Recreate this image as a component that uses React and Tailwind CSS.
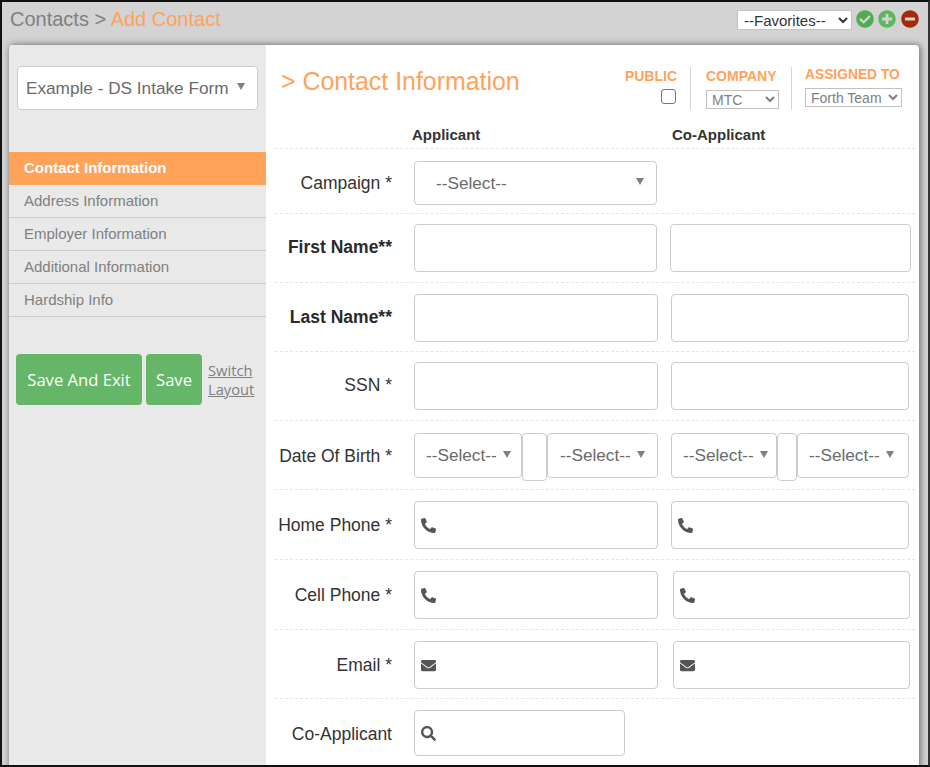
import React from "react";
import { FaPhoneAlt, FaEnvelope, FaSearch, FaCheckCircle, FaPlusCircle, FaMinusCircle } from "react-icons/fa";

const Caret = ({ className = "" }) => (
  <span className={`w-0 h-0 border-l-[4.5px] border-r-[4.5px] border-t-[7px] border-l-transparent border-r-transparent border-t-[#808080] ${className}`} />
);

const Sel = ({ cls, text = "--Select--", pad = "pl-[11px]", gap = "ml-[6px]" }) => (
  <div className={`flex items-center shrink-0 bg-white border border-[#cccccc] rounded-[4px] text-[17.2px] text-[#6b6b6b] ${pad} ${cls}`}>
    <span>{text}</span>
    <Caret className={`-mt-[3px] ${gap}`} />
  </div>
);

const Inp = ({ cls, icon }) => (
  <div className={`flex items-center shrink-0 bg-white border border-[#cccccc] rounded-[4px] pl-[6px] text-[#555555] ${cls}`}>
    {icon}
  </div>
);

const Row = ({ label, bold, h, pt, lm, children, last }) => (
  <div className={`flex items-start ${last ? "" : "border-b border-dashed border-[#e6e6e6]"} ${h} ${pt}`}>
    <div className={`w-[117px] shrink-0 text-right text-[17.5px] leading-[24px] ${lm} ${bold ? "font-bold text-[#2a2a2a]" : "text-[#333333]"}`}>{label}</div>
    <div className="flex items-start ml-[22px]">{children}</div>
  </div>
);

const Phone = <FaPhoneAlt className="w-[15px] h-[15px]" />;
const Mail = <FaEnvelope className="w-[15px] h-[15px]" />;
const Search = <FaSearch className="w-[15px] h-[15px]" />;

const nav = ["Address Information", "Employer Information", "Additional Information", "Hardship Info"];

export default function App() {
  return (
    <div className="h-[767px] w-[930px] overflow-hidden border-2 border-[#111111] border-r-[#333333] bg-[#d3d3d3] font-['Liberation_Sans',Arial,sans-serif]">
      <div className="flex items-center justify-between h-[43px] pl-[8px] pr-[9px]">
        <div className="text-[20px] leading-[28px] -mt-[9px]">
          <span className="text-[#808080]">Contacts &gt; </span>
          <span className="text-[#ffa25a]">Add Contact</span>
        </div>
        <div className="flex items-center -mt-[8px]">
          <select className="w-[115px] h-[20px] bg-white border border-[#c4c4c4] text-[15px] text-[#333333] pl-[2px]">
            <option>--Favorites--</option>
          </select>
          <FaCheckCircle className="ml-[4px] -mt-[1px] w-[18px] h-[18px] text-[#4cae4c]" />
          <FaPlusCircle className="ml-[4px] -mt-[1px] w-[18px] h-[18px] text-[#5cb85c]" />
          <FaMinusCircle className="ml-[5px] -mt-[1px] w-[18px] h-[18px] text-[#a52a0a]" />
        </div>
      </div>

      <div className="flex ml-[7px] w-[910px] h-[730px] rounded-t-[4px] bg-white shadow-[1px_0_7px_rgba(0,0,0,0.55)] overflow-hidden">
        <aside className="w-[257px] shrink-0 bg-[#e9e9e9]">
          <div className="px-[8px] pt-[21px]">
            <div className="flex items-center justify-between h-[44px] w-[241px] bg-white border border-[#cccccc] rounded-[4px] pl-[8px] pr-[12px] text-[17.2px] text-[#6b6b6b]">
              <span className="mt-[1px]">Example - DS Intake Form</span>
              <Caret className="-mt-[4px]" />
            </div>
          </div>
          <div className="mt-[42px]">
            <div className="h-[33px] flex items-center pl-[15px] bg-[#ffa25a] text-white font-bold text-[15px]">Contact Information</div>
            {nav.map((n) => (
              <div key={n} className="h-[33px] flex items-center pl-[15px] border-b border-[#cccccc] text-[#808080] text-[15px]">{n}</div>
            ))}
          </div>
          <div className="flex items-start mt-[37px] pl-[7px] font-['Open_Sans',sans-serif]">
            <button className="w-[126px] h-[51px] pt-[2px] bg-[#65b668] text-white rounded-[4px] text-[16.6px]">Save And Exit</button>
            <button className="w-[56px] h-[51px] pt-[2px] ml-[4px] bg-[#65b668] text-white rounded-[4px] text-[16.6px]">Save</button>
            <div className="ml-[6px] text-[14.7px] leading-[19px] text-left text-[#808080] underline mt-[7px] w-[46px]">
              <div>Switch</div>
              <div>Layout</div>
            </div>
          </div>
        </aside>

        <main className="flex-1 pl-[9px] pr-[4px]">
          <div className="flex justify-between h-[68px] pl-[6px] pr-[13px]">
            <h1 className="text-[24.9px] leading-[32px] text-[#ffa25a] mt-[20px]">&gt; Contact Information</h1>
            <div className="flex items-start mt-[22px]">
              <div className="flex flex-col items-end h-[43px] pr-[14px]">
                <span className="text-[14px] leading-[18px] font-bold text-[#ffa25a] -mr-[1px]">PUBLIC</span>
                <input type="checkbox" className="appearance-none w-[15px] h-[15px] border border-[#767676] rounded-[3px] mt-[4px] bg-white" />
              </div>
              <div className="flex flex-col h-[43px] border-l border-[#d4d4d4] pl-[15px] pr-[12px]">
                <span className="text-[14px] leading-[18px] font-bold text-[#ffa25a]">COMPANY</span>
                <select className="w-[73px] h-[19px] border border-[#c0c0c0] text-[14px] text-[#808080] mt-[5px] pl-[1px]"><option>MTC</option></select>
              </div>
              <div className="flex flex-col h-[43px] border-l border-[#d4d4d4] pl-[13px]">
                <span className="text-[13.8px] leading-[16px] font-bold text-[#ffa25a]">ASSIGNED TO</span>
                <select className="w-[97px] h-[19px] border border-[#c0c0c0] text-[14px] text-[#808080] mt-[5px] pl-[1px]"><option>Forth Team</option></select>
              </div>
            </div>
          </div>

          <div className="flex h-[36px] items-center pt-[10px] border-b border-dashed border-[#e6e6e6] text-[15px] font-bold text-[#333333]">
            <span className="ml-[137px] w-[260px]">Applicant</span>
            <span>Co-Applicant</span>
          </div>

          <Row label="Campaign *" h="h-[65px]" pt="pt-[12px]" lm="mt-[10px]">
            <Sel cls="w-[243px] h-[44px] justify-between pr-[12px] leading-[24px]" pad="pl-[21px]" gap="" />
          </Row>
          <Row label="First Name**" bold h="h-[69px]" pt="pt-[10px]" lm="mt-[11px]">
            <Inp cls="w-[243px] h-[48px]" />
            <Inp cls="w-[241px] h-[48px] ml-[13px]" />
          </Row>
          <Row label="Last Name**" bold h="h-[69px]" pt="pt-[11px]" lm="mt-[11px]">
            <Inp cls="w-[244px] h-[48px]" />
            <Inp cls="w-[238px] h-[48px] ml-[13px]" />
          </Row>
          <Row label="SSN *" h="h-[69px]" pt="pt-[10px]" lm="mt-[11px]">
            <Inp cls="w-[244px] h-[48px]" />
            <Inp cls="w-[238px] h-[48px] ml-[13px]" />
          </Row>
          <Row label="Date Of Birth *" h="h-[69px]" pt="pt-[12px]" lm="mt-[11px]">
            <Sel cls="w-[108px] h-[45px]" />
            <Inp cls="w-[25px] h-[48px]" />
            <Sel cls="w-[111px] h-[45px]" pad="pl-[12px]" />
            <Sel cls="w-[106px] h-[45px] ml-[13px]" />
            <Inp cls="w-[20px] h-[48px]" />
            <Sel cls="w-[112px] h-[45px]" />
          </Row>
          <Row label="Home Phone *" h="h-[70px]" pt="pt-[11px]" lm="mt-[12px]">
            <Inp cls="w-[244px] h-[48px]" icon={Phone} />
            <Inp cls="w-[238px] h-[48px] ml-[13px]" icon={Phone} />
          </Row>
          <Row label="Cell Phone *" h="h-[70px]" pt="pt-[11px]" lm="mt-[12px]">
            <Inp cls="w-[244px] h-[48px]" icon={Phone} />
            <Inp cls="w-[237px] h-[48px] ml-[15px]" icon={Phone} />
          </Row>
          <Row label="Email *" h="h-[69px]" pt="pt-[11px]" lm="mt-[12px]">
            <Inp cls="w-[244px] h-[48px]" icon={Mail} />
            <Inp cls="w-[237px] h-[48px] ml-[15px]" icon={Mail} />
          </Row>
          <Row label="Co-Applicant" last h="h-[60px]" pt="pt-[11px]" lm="mt-[12px]">
            <Inp cls="w-[211px] h-[46px]" icon={Search} />
          </Row>
        </main>
      </div>
    </div>
  );
}
